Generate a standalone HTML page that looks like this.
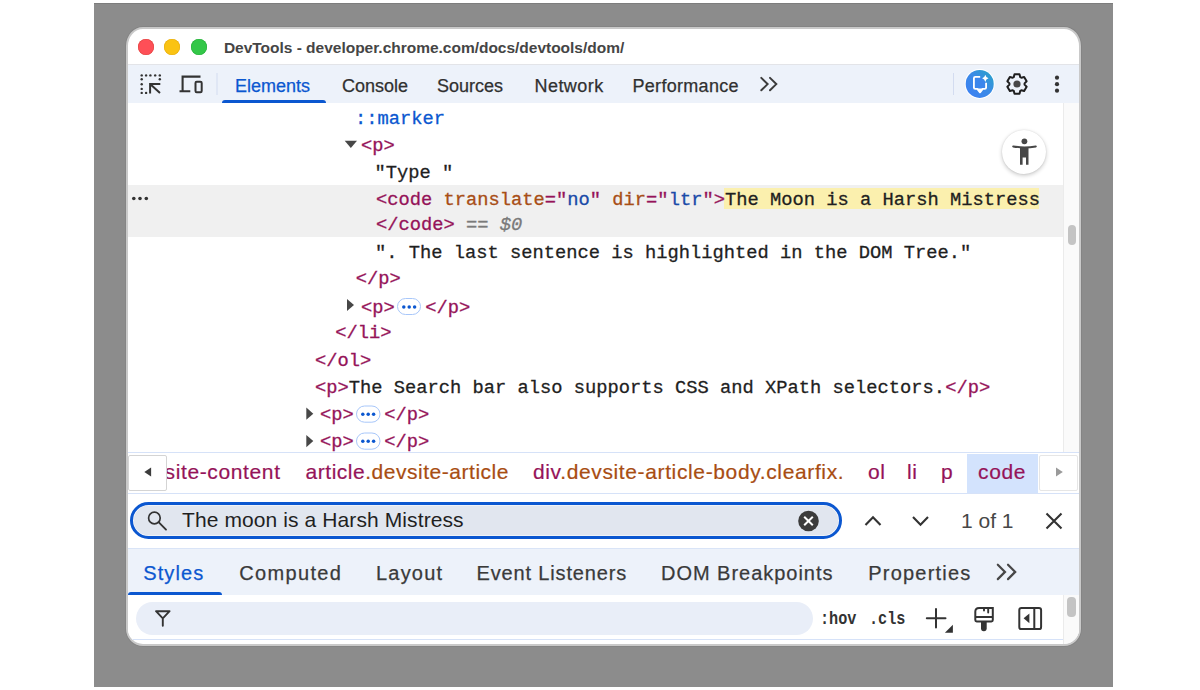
<!DOCTYPE html>
<html><head><meta charset="utf-8">
<style>
*{margin:0;padding:0;box-sizing:border-box}
html,body{width:1200px;height:690px;overflow:hidden;background:#fff;position:relative;font-family:"Liberation Sans",sans-serif}
.a{position:absolute}
svg{position:absolute;overflow:visible}
#bg{left:94px;top:3px;width:1019px;height:684px;background:#8c8c8c;border-top:1px solid #7d7d7d}
#win{left:126.1px;top:27px;width:954.9px;height:619px;background:#fff;border-radius:17px 17px 17px 17px/19px 19px 17px 17px;border:2px solid #c9c9c9;box-shadow:0 0 0 .9px #848484;overflow:hidden}
.dot{width:16px;height:16px;border-radius:50%;top:39px}
#title{left:223.9px;top:37.6px;letter-spacing:-.015px;font-size:15.5px;font-weight:bold;color:#454545;white-space:nowrap;line-height:20px}
#tb{left:128px;top:64.3px;width:951px;height:38.3px;background:#edf2fa;border-top:1.2px solid #e3e4e8}
.tab{-webkit-text-stroke:.25px currentColor;top:75px;font-size:18px;color:#303030;line-height:22px;white-space:nowrap}
.mono{-webkit-text-stroke:.3px currentColor;font-family:"Liberation Mono",monospace;font-size:18.75px;line-height:26.9px;white-space:pre;color:#1f1f1f}
.tg{color:#951359}
.an{color:#a84e16}
.av{color:#1a4aa8}
.ps{color:#0b57d0}
.gr{color:#7a7a7a}
.hl{background:#fdf0a6}
.bc{-webkit-text-stroke:.2px currentColor;top:459px;font-size:21px;line-height:26px;white-space:nowrap;color:#951359;letter-spacing:.63px}
.bcb{color:#a84d12}
.bt{-webkit-text-stroke:.25px currentColor;top:561px;font-size:20px;line-height:24px;white-space:nowrap;color:#3a3a3a;letter-spacing:1px}
</style></head><body>
<div id="bg" class="a"></div>
<div id="win" class="a"></div>
<div id="clip" class="a" style="left:0;top:0;width:1200px;height:690px;clip-path:inset(28.9px 120.9px 45.9px 128px round 15px 15px 15.5px 15.5px)">
<!-- traffic lights -->
<div class="a dot" style="left:137.75px;background:#fe4f57;box-shadow:inset 0 0 0 .6px #e0443f"></div>
<div class="a dot" style="left:164.25px;background:#fac313;box-shadow:inset 0 0 0 .6px #e6ad10"></div>
<div class="a dot" style="left:190.75px;background:#33c748;box-shadow:inset 0 0 0 .6px #27b03a"></div>
<div id="title" class="a">DevTools - developer.chrome.com/docs/devtools/dom/</div>

<!-- toolbar -->
<div id="tb" class="a"></div>
<svg width="1200" height="690" style="left:0;top:0">
  <g fill="#333">
    <circle cx="141.7" cy="75.4" r="1.2"/><circle cx="146.1" cy="75.4" r="1.2"/><circle cx="150.4" cy="75.4" r="1.2"/><circle cx="155.2" cy="75.4" r="1.2"/><circle cx="159.8" cy="75.4" r="1.2"/>
    <circle cx="141.7" cy="79.3" r="1.2"/><circle cx="141.7" cy="84.3" r="1.2"/><circle cx="141.7" cy="88.9" r="1.2"/><circle cx="141.7" cy="92.9" r="1.2"/>
    <circle cx="159.8" cy="79.3" r="1.2"/><circle cx="146.1" cy="92.9" r="1.2"/>
  </g>
  <path d="M150.1 93.4V83.9H160.3M150.1 83.9L160 93.1" stroke="#333" stroke-width="2" fill="none"/>
  <path d="M182.6 91.3V76.6H200.5M179.5 91.3H190.3" stroke="#333" stroke-width="2.1" fill="none"/>
  <rect x="195.5" y="81.8" width="6.2" height="10.4" rx="1.2" stroke="#333" stroke-width="2" fill="none"/>
  <line x1="217" y1="73" x2="217" y2="95" stroke="#d3dcf0" stroke-width="1"/>
  <line x1="953.5" y1="73" x2="953.5" y2="95" stroke="#d3dcf0" stroke-width="1"/>
</svg>
<div class="a tab" style="left:235px;color:#0b57d0">Elements</div>
<div class="a tab" style="left:342px">Console</div>
<div class="a tab" style="left:437px">Sources</div>
<div class="a tab" style="left:534.5px;letter-spacing:.45px">Network</div>
<div class="a tab" style="left:632.5px;letter-spacing:.3px">Performance</div>
<svg width="1200" height="690" style="left:0;top:0">
  <path d="M761.3 77.9L767.6 84.1L761.3 90.3M770 77.9L776.3 84.1L770 90.3" stroke="#3c3c3c" stroke-width="2" fill="none" stroke-linecap="round"/>
</svg>
<div class="a" style="left:222px;top:100px;width:104px;height:3px;background:#0b57d0;border-radius:3px 3px 0 0"></div>
<!-- AI button -->
<svg width="1200" height="690" style="left:0;top:0">
  <defs><linearGradient id="ai" x1="0" y1="1" x2="1" y2="0"><stop offset="0" stop-color="#3d7ff5"/><stop offset=".55" stop-color="#3a8be6"/><stop offset="1" stop-color="#26a6c4"/></linearGradient></defs>
  <circle cx="979.7" cy="83.9" r="15" fill="#fff"/>
  <circle cx="979.7" cy="83.9" r="14" fill="url(#ai)"/>
  <path d="M980.2 76.8H975.3Q973.9 76.8 973.9 78.2V87.5Q973.9 88.9 975.3 88.9H977.3L980 92.3L982.7 88.9H984.7Q986.1 88.9 986.1 87.5V82.8" stroke="#fff" stroke-width="1.85" fill="#3b86ec" stroke-linejoin="round"/>
  <path d="M977 88.5L980 93.3L983 88.5Z" fill="#fff"/>
  <path d="M985.3 74.8Q985.9 77.7 988.5 78.3Q985.9 78.9 985.3 81.9Q984.7 78.9 982.1 78.3Q984.7 77.7 985.3 74.8Z" fill="#fff"/>
  <g transform="translate(1017 84)">
    <path d="M-3.24 -6.88 L-2.49 -9.69 L2.49 -9.69 L3.24 -6.88 L4.34 -6.24 L7.14 -7.00 L9.63 -2.69 L7.57 -0.64 L7.57 0.64 L9.63 2.69 L7.14 7.00 L4.34 6.24 L3.24 6.88 L2.49 9.69 L-2.49 9.69 L-3.24 6.88 L-4.34 6.24 L-7.14 7.00 L-9.63 2.69 L-7.57 0.64 L-7.57 -0.64 L-9.63 -2.69 L-7.14 -7.00 L-4.34 -6.24Z" stroke="#1f1f1f" stroke-width="2" fill="none" stroke-linejoin="round"/>
    <circle cx="0" cy="0" r="3.6" fill="#474747"/>
  </g>
  <g fill="#333"><circle cx="1057" cy="77.7" r="2.1"/><circle cx="1057" cy="84.2" r="2.1"/><circle cx="1057" cy="90.7" r="2.1"/></g>
</svg>

<!-- DOM tree -->
<div class="a" style="left:128px;top:185px;width:935px;height:52px;background:#f0f0f0"></div>
<div class="a" style="left:1063px;top:102.6px;width:16px;height:349.4px;background:#fafafa;border-left:1px solid #ebebeb"></div>
<div class="a" style="left:1068px;top:225px;width:8px;height:20px;background:#c4c4c4;border-radius:4px"></div>
<svg width="1200" height="690" style="left:0;top:0">
  <g fill="#333"><circle cx="133.8" cy="198.5" r="1.8"/><circle cx="140" cy="198.5" r="1.8"/><circle cx="146.3" cy="198.5" r="1.8"/></g>
  <path d="M344.7 140.7H357L350.85 148Z" fill="#474747"/>
  <path d="M347 299V311L354 305Z" fill="#474747"/>
  <path d="M306.3 407.6V419.8L313.3 413.7Z" fill="#474747"/>
  <path d="M306.3 435V447.2L313.3 441.1Z" fill="#474747"/>
</svg>

<div class="a mono" style="left:355px;top:106.3px"><span class="ps">::marker</span></div>
<div class="a mono" style="left:361px;top:133.2px"><span class="tg">&lt;p&gt;</span></div>
<div class="a mono" style="left:374.5px;top:159.6px">"Type "</div>
<div class="a" style="left:724px;top:187.5px;width:315px;height:21.5px;background:#fbf0ae"></div>
<div class="a mono" style="left:376px;top:186.5px"><span class="tg">&lt;code</span><span class="an"> translate</span><span class="tg">="</span><span class="av">no</span><span class="tg">"</span><span class="an"> dir</span><span class="tg">="</span><span class="av">ltr</span><span class="tg">"&gt;</span>The Moon is a Harsh Mistress</div>
<div class="a mono" style="left:376px;top:211.5px"><span class="tg">&lt;/code&gt;</span><span class="gr"> == <i>$0</i></span></div>
<div class="a mono" style="left:375px;top:240.3px">". The last sentence is highlighted in the DOM Tree."</div>
<div class="a mono" style="left:355.7px;top:266px"><span class="tg">&lt;/p&gt;</span></div>
<div class="a mono" style="left:361px;top:294.6px"><span class="tg">&lt;p&gt;</span></div>
<div class="a mono" style="left:335.3px;top:319.9px"><span class="tg">&lt;/li&gt;</span></div>
<div class="a mono" style="left:315px;top:348.4px"><span class="tg">&lt;/ol&gt;</span></div>
<div class="a mono" style="left:315px;top:375.3px"><span class="tg">&lt;p&gt;</span>The Search bar also supports CSS and XPath selectors.<span class="tg">&lt;/p&gt;</span></div>
<div class="a mono" style="left:320px;top:402.2px"><span class="tg">&lt;p&gt;</span></div>
<div class="a mono" style="left:320px;top:429.1px"><span class="tg">&lt;p&gt;</span></div>
<div class="a mono" style="left:425.3px;top:294.6px"><span class="tg">&lt;/p&gt;</span></div>
<div class="a mono" style="left:384.3px;top:402.2px"><span class="tg">&lt;/p&gt;</span></div>
<div class="a mono" style="left:384.3px;top:429.1px"><span class="tg">&lt;/p&gt;</span></div>
<svg width="1200" height="690" style="left:0;top:0">
  <g stroke="#a8c7fa" stroke-width="1" fill="#fff">
    <rect x="397.5" y="298.5" width="23" height="16" rx="8"/>
    <rect x="356.5" y="406" width="23.5" height="16.2" rx="8.1"/>
    <rect x="356.5" y="433" width="23.5" height="16.2" rx="8.1"/>
  </g>
  <g fill="#0b57d0">
    <circle cx="403.8" cy="307" r="1.75"/><circle cx="409.2" cy="307" r="1.75"/><circle cx="414.6" cy="307" r="1.75"/>
    <circle cx="362.8" cy="414.3" r="1.75"/><circle cx="368.2" cy="414.3" r="1.75"/><circle cx="373.6" cy="414.3" r="1.75"/>
    <circle cx="362.8" cy="441.3" r="1.75"/><circle cx="368.2" cy="441.3" r="1.75"/><circle cx="373.6" cy="441.3" r="1.75"/>
  </g>
</svg>
<!-- a11y button -->
<div class="a" style="left:1002px;top:129.7px;width:44px;height:44px;border-radius:50%;background:#fff;box-shadow:0 1.5px 4px rgba(0,0,0,.22),0 0 1.5px rgba(0,0,0,.12)"></div>
<svg width="1200" height="690" style="left:0;top:0">
  <circle cx="1024.4" cy="141.3" r="2.9" fill="#474747"/>
  <path d="M1013.2 146.4Q1024.4 148.4 1035.8 146.4" stroke="#474747" stroke-width="2" fill="none" stroke-linecap="round"/>
  <path d="M1020 147H1028.5V164.8H1026V157.5H1022.6V164.8H1020Z" fill="#474747"/>
</svg>

<!-- breadcrumbs -->
<div class="a" style="left:128px;top:452px;width:951px;height:41.5px;border-top:1px solid #d6e2f8;border-bottom:1px solid #d6e2f8;background:#fff"></div>
<div class="a" style="left:967px;top:453.5px;width:71px;height:39px;background:#d3e3fd"></div>
<div class="a bc" style="left:164.5px">site-content</div>
<div class="a bc" style="left:305.6px;letter-spacing:.52px">article<span class="bcb">.devsite-article</span></div>
<div class="a bc" style="left:533px">div<span class="bcb">.devsite-article-body.clearfix.</span></div>
<div class="a bc" style="left:868px">ol</div>
<div class="a bc" style="left:907px">li</div>
<div class="a bc" style="left:941px">p</div>
<div class="a bc" style="left:978px">code</div>
<div class="a" style="left:128.2px;top:454.6px;width:38.7px;height:36.8px;border:1px solid #d4d4d4;border-radius:2px;background:#fff"></div>
<div class="a" style="left:1039px;top:454.6px;width:39px;height:36.8px;border:1px solid #e6e6e6;border-radius:2px;background:#fff"></div>
<svg width="1200" height="690" style="left:0;top:0">
  <path d="M151.1 467.6V476.4L144.3 472Z" fill="#3c3c3c"/>
  <path d="M1056 467.6V476.4L1062.8 472Z" fill="#9a9a9a"/>
</svg>

<!-- search row -->
<div class="a" style="left:130.3px;top:501.5px;width:711.6px;height:37.3px;border-radius:19px;border:3.4px solid #0b57d0;background:#e1e6ef;box-shadow:inset 0 0 0 .6px #fff"></div>
<svg width="1200" height="690" style="left:0;top:0">
  <circle cx="154.4" cy="518" r="5.8" stroke="#333" stroke-width="1.7" fill="none"/>
  <path d="M158.6 522.2L166 529.6" stroke="#333" stroke-width="1.9" stroke-linecap="round"/>
  <circle cx="808.5" cy="521" r="10.3" fill="#3c3c3c"/>
  <path d="M804.2 516.7L812.8 525.3M812.8 516.7L804.2 525.3" stroke="#fff" stroke-width="2"/>
  <path d="M865.5 525L873 517.3L880.5 525" stroke="#333" stroke-width="2.1" fill="none"/>
  <path d="M913 517L920.5 524.7L928 517" stroke="#333" stroke-width="2.1" fill="none"/>
  <path d="M1046.5 513.5L1061.5 528.5M1061.5 513.5L1046.5 528.5" stroke="#333" stroke-width="2.1"/>
</svg>
<div class="a" style="left:182px;top:507.2px;letter-spacing:.1px;font-size:21px;line-height:26px;color:#1f1f1f;white-space:nowrap">The moon is a Harsh Mistress</div>
<div class="a" style="left:961px;top:508px;font-size:21px;line-height:26px;color:#474747;white-space:nowrap">1 of 1</div>

<!-- bottom tabs -->
<div class="a" style="left:128px;top:547.8px;width:951px;height:47.2px;background:#edf2fa;border-top:1.8px solid #d9e4f7"></div>
<div class="a bt" style="left:143.2px;letter-spacing:1.1px;color:#0b57d0">Styles</div>
<div class="a bt" style="left:239.3px;letter-spacing:1.33px">Computed</div>
<div class="a bt" style="left:376px;letter-spacing:1.2px">Layout</div>
<div class="a bt" style="left:476.5px;letter-spacing:.85px">Event Listeners</div>
<div class="a bt" style="left:661px;letter-spacing:.97px">DOM Breakpoints</div>
<div class="a bt" style="left:868.3px;letter-spacing:1.2px">Properties</div>
<svg width="1200" height="690" style="left:0;top:0">
  <path d="M997.8 564.7L1005 571.9L997.8 579.1M1008 564.7L1015.2 571.9L1008 579.1" stroke="#474747" stroke-width="2.2" fill="none" stroke-linecap="round"/>
</svg>
<div class="a" style="left:128px;top:592px;width:93.5px;height:3px;background:#0b57d0;border-radius:3px 3px 0 0"></div>

<!-- filter row -->
<div class="a" style="left:128px;top:595px;width:951px;height:45px;background:#fff;border-bottom:1px solid #d6e2f8"></div>
<div class="a" style="left:136px;top:601.7px;width:677px;height:33.1px;border-radius:17px;background:#e9eef8"></div>
<svg width="1200" height="690" style="left:0;top:0">
  <path d="M156 611.2H169.6L162.8 618.4ZM162.8 618.1V625.8" stroke="#333" stroke-width="1.9" fill="none" stroke-linejoin="round" stroke-linecap="round"/>
</svg>
<div class="a" style="left:819.5px;top:607px;font-family:'Liberation Mono',monospace;font-size:19px;line-height:24px;font-weight:bold;color:#333;white-space:nowrap;transform:scaleX(.8);transform-origin:0 0">:hov</div>
<div class="a" style="left:869px;top:607px;font-family:'Liberation Mono',monospace;font-size:19px;line-height:24px;font-weight:bold;color:#333;white-space:nowrap;transform:scaleX(.8);transform-origin:0 0">.cls</div>
<svg width="1200" height="690" style="left:0;top:0">
  <path d="M926.8 618.3H945.5M936 608.9V627.5" stroke="#333" stroke-width="2" stroke-linecap="round"/>
  <path d="M952.9 624.8V632.8H944.9Z" fill="#333"/>
  <path d="M975.3 620V611.7Q975.3 607.9 979.1 607.9H992.8V620Q992.8 621.4 991.4 621.4H976.7Q975.3 621.4 975.3 620Z M975.3 617H992.8" stroke="#333" stroke-width="2" fill="none"/>
  <path d="M984 608V610.6M988.2 608V612.6" stroke="#333" stroke-width="1.9" stroke-linecap="round"/>
  <path d="M981 621H986.7V628.3Q986.7 631.2 983.85 631.2Q981 631.2 981 628.3Z" fill="#333"/>
  <rect x="1019.3" y="607.9" width="21.8" height="21.2" rx="2.2" stroke="#333" stroke-width="2" fill="none"/>
  <path d="M1034.3 608V629" stroke="#333" stroke-width="2"/>
  <path d="M1029.4 613.4V623.2L1023.6 618.3Z" fill="#333"/>
</svg>
<div class="a" style="left:1062.5px;top:595px;width:16.5px;height:50px;background:#fafafa;border-left:1px solid #ebebeb"></div>
<div class="a" style="left:1067px;top:597px;width:8.5px;height:19.6px;background:#c4c4c4;border-radius:4px"></div>

</div>
</body></html>
